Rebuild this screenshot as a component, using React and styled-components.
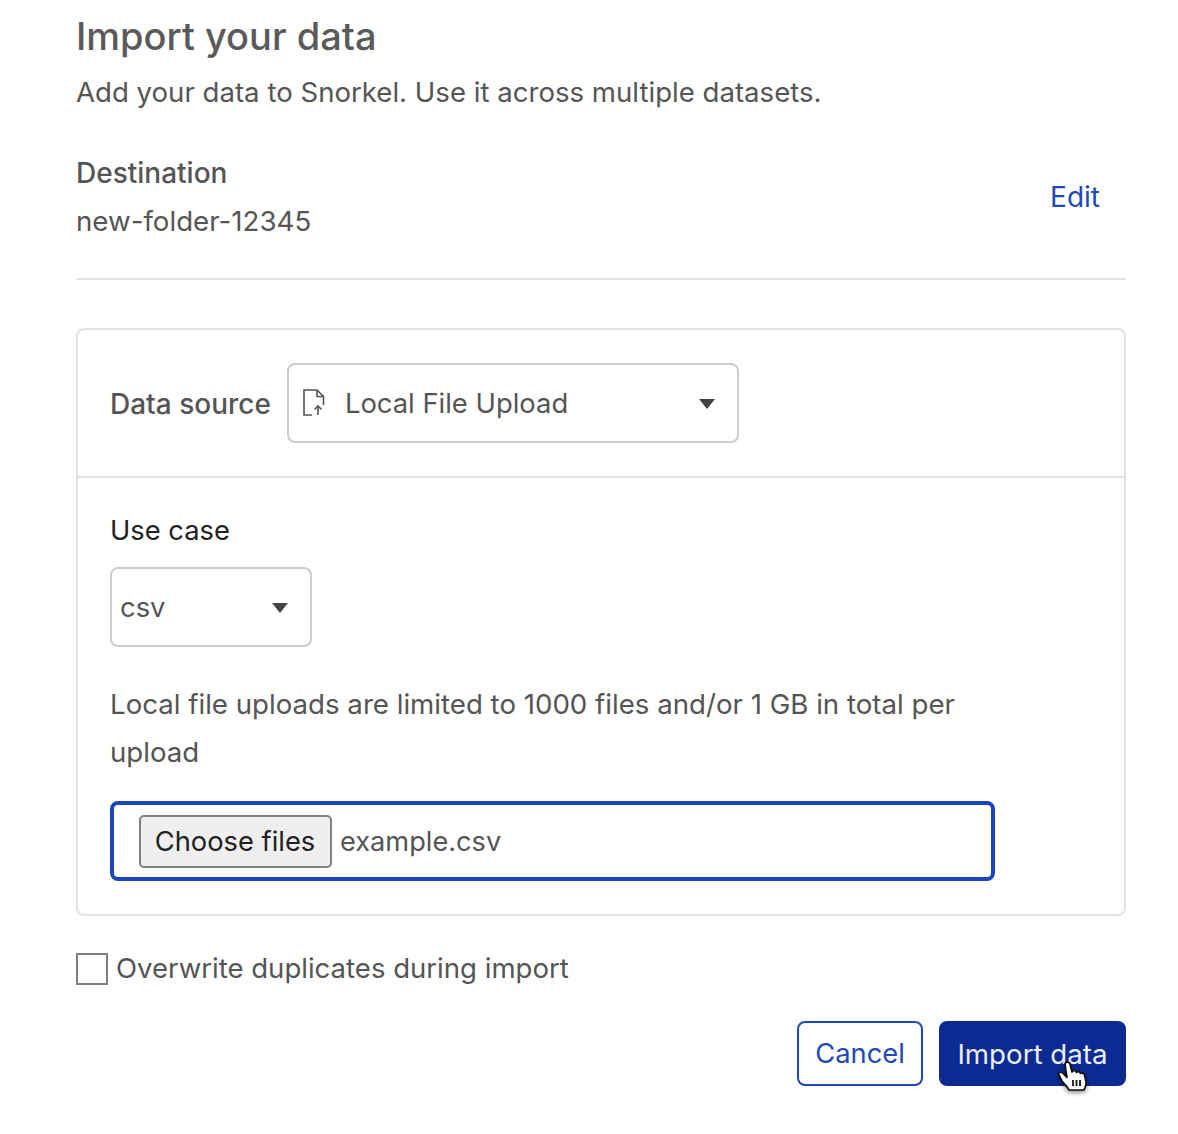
import React from "react";
import styled, { createGlobalStyle } from "styled-components";

const Global = createGlobalStyle`
  html, body { margin: 0; padding: 0; background: #fff; }
  body { font-family: Inter, "Liberation Sans", sans-serif; color: #555; -webkit-font-smoothing: antialiased; }
`;
const Page = styled.div`
  width: 1050px;
  height: 1134px;
  box-sizing: border-box;
  margin-left: 76px;
  padding-top: 13px;
  display: flex;
  flex-direction: column;
`;
const Title = styled.h1`
  margin: 0;
  font-size: 38px;
  line-height: 46px;
  font-weight: 500;
  color: #5a5a5a;
`;
const Subtitle = styled.p`
  margin: 9px 0 0;
  font-size: 27.6px;
  line-height: 48px;
  height: 48px;
  color: #555;
`;
const Destination = styled.div`
  margin-top: 33px;
  display: flex;
  justify-content: space-between;
  align-items: center;
  padding-bottom: 33px;
  border-bottom: 2px solid #e2e2e2;
`;
const DestLabel = styled.div`
  font-size: 28px;
  line-height: 48px;
  font-weight: 500;
  color: #555;
`;
const DestValue = styled.div`
  font-size: 27.7px;
  line-height: 48px;
  color: #555;
`;
const EditLink = styled.a`
  font-size: 28px;
  color: #1f48b8;
  margin: 0 26px 1px 0;
`;
const Card = styled.section`
  margin-top: 48px;
  border: 2px solid #e2e2e2;
  border-radius: 8px;
`;
const SourceRow = styled.div`
  display: flex;
  align-items: center;
  gap: 16px;
  padding: 33px 32px;
  border-bottom: 2px solid #e2e2e2;
`;
const FieldLabel = styled.label`
  font-size: 28px;
  font-weight: 500;
  color: #555;
  padding-top: 1px;
`;
const Select = styled.div`
  box-sizing: border-box;
  width: ${p => p.$w}px;
  height: 80px;
  display: flex;
  align-items: center;
  border: 2px solid #c9ccd0;
  border-radius: 8px;
  padding: 0 ${p => p.$pr}px 0 ${p => p.$pl}px;
  font-size: 27.4px;
  color: #555;
`;
const SelectText = styled.span`
  flex: 1;
  margin-left: ${p => p.$ml || 0}px;
`;
const Caret = styled.span`
  width: 0;
  height: 0;
  margin-top: 2px;
  border-left: 8px solid transparent;
  border-right: 8px solid transparent;
  border-top: 10px solid #444;
`;
const Body = styled.div`
  padding: 29px 32px 33px;
`;
const UseCase = styled.div`
  font-size: 27.3px;
  line-height: 48px;
  font-weight: 400;
  color: #222;
  margin-bottom: 12px;
`;
const Hint = styled.p`
  margin: 33px 0 25px;
  width: 900px;
  font-size: 27.65px;
  line-height: 48px;
  color: #555;
`;
const FileBox = styled.div`
  box-sizing: border-box;
  width: 885px;
  height: 80px;
  display: flex;
  align-items: center;
  padding-left: 25px;
  border: 4px solid #1b45bb;
  border-radius: 8px;
  font-size: 27.2px;
  color: #555;
`;
const ChooseButton = styled.button`
  box-sizing: border-box;
  width: 193px;
  height: 53px;
  margin-right: 8px;
  padding: 0 1px 0 0;
  background: #efefef;
  border: 2px solid #808080;
  border-radius: 5px;
  font-family: inherit;
  font-size: 27.3px;
  color: #222;
`;
const CheckRow = styled.div`
  margin-top: 35px;
  display: flex;
  align-items: center;
  gap: 8px;
  font-size: 27.55px;
  color: #555;
`;
const Box = styled.span`
  box-sizing: border-box;
  width: 32px;
  height: 32px;
  border: 2px solid #808080;
`;
const CheckText = styled.span`
  margin-bottom: 2px;
`;
const Actions = styled.div`
  margin-top: 34px;
  display: flex;
  justify-content: flex-end;
  gap: 16px;
`;
const Button = styled.button`
  position: relative;
  box-sizing: border-box;
  height: 65px;
  width: ${p => p.$w}px;
  padding: 0;
  border-radius: 8px;
  font-family: inherit;
  font-size: ${p => (p.$primary ? 27.7 : 27.3)}px;
  border: 2px solid ${p => (p.$primary ? "#0c2a92" : "#1f48b8")};
  background: ${p => (p.$primary ? "#0c2a92" : "#fff")};
  color: ${p => (p.$primary ? "#e8eefc" : "#1f48b8")};
`;
const Cursor = styled.svg`
  position: absolute;
  left: 117px;
  top: 37px;
  width: 30px;
  height: 31px;
  filter: drop-shadow(0 2px 2px rgba(0,0,0,.45));
`;

const FileIcon = () => (
  <svg width="24" height="30" viewBox="0 0 24 30" fill="none" stroke="#555" strokeWidth="1.6">
    <path d="M10 27H2V2h13l6.500 6.500V17" />
    <path d="M15 2v6.500h6.500" />
    <path d="M16 27v-9M12.500 21.500L16 18l3.500 3.500" />
  </svg>
);

const Hand = () => (
  <Cursor viewBox="0 0 30 31">
    <path
      d="M7 4c0-2.500 4.500-2.500 5 0l2 8c1-2 4-1.500 4.500.5c1-1.500 3.500-1 4 1c1-1 3.500-.5 4 1.500l1.500 7c.5 3-.5 5-2 8H11c-1-3-4-5-7-9L1 15c-1-2 1-3.500 3-2.500l5 5L7 4z"
      fill="#fff"
      stroke="#111"
      strokeWidth="1.700"
      strokeLinejoin="round"
    />
    <path d="M15 20v6M18.500 20v6M22 20v6" stroke="#111" strokeWidth="1.800" />
  </Cursor>
);

export default function App() {
  return (
    <>
      <Global />
      <Page>
        <Title>Import your data</Title>
        <Subtitle>Add your data to Snorkel. Use it across multiple datasets.</Subtitle>
        <Destination>
          <div>
            <DestLabel>Destination</DestLabel>
            <DestValue>new-folder-12345</DestValue>
          </div>
          <EditLink>Edit</EditLink>
        </Destination>
        <Card>
          <SourceRow>
            <FieldLabel>Data source</FieldLabel>
            <Select $w={452} $pl={13} $pr={22}>
              <FileIcon />
              <SelectText $ml={19}>Local File Upload</SelectText>
              <Caret />
            </Select>
          </SourceRow>
          <Body>
            <UseCase>Use case</UseCase>
            <Select $w={202} $pl={8} $pr={22}>
              <SelectText>csv</SelectText>
              <Caret />
            </Select>
            <Hint>Local file uploads are limited to 1000 files and/or 1 GB in total per upload</Hint>
            <FileBox>
              <ChooseButton>Choose files</ChooseButton>
              example.csv
            </FileBox>
          </Body>
        </Card>
        <CheckRow>
          <Box />
          <CheckText>Overwrite duplicates during import</CheckText>
        </CheckRow>
        <Actions>
          <Button $w={126}>Cancel</Button>
          <Button $w={187} $primary>
            Import data
            <Hand />
          </Button>
        </Actions>
      </Page>
    </>
  );
}
